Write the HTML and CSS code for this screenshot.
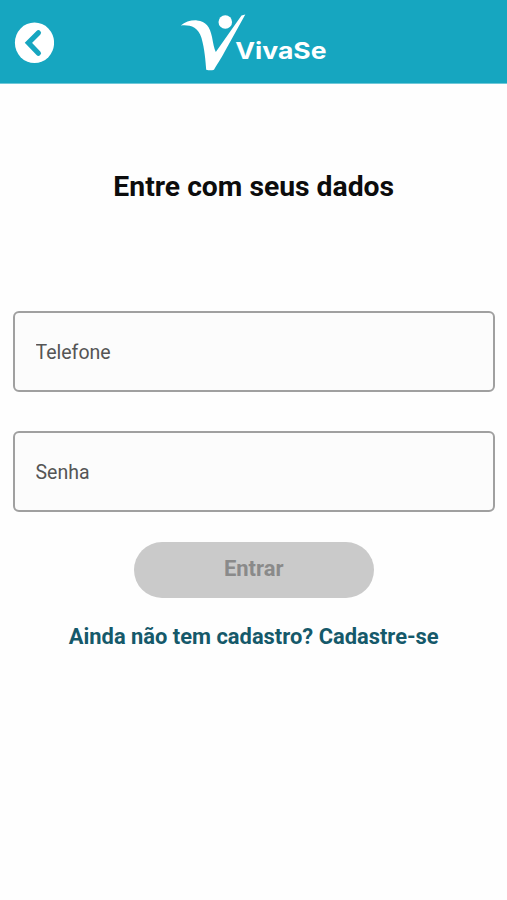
FILE: index.html
```html
<!DOCTYPE html>
<html lang="pt-BR">
<head>
<meta charset="utf-8">
<meta name="viewport" content="width=device-width, initial-scale=1">
<title>VivaSe</title>
<link rel="stylesheet" href="styles.css">
</head>
<body>
<header class="topbar">
  <button class="back" type="button" aria-label="Voltar">
    <svg width="40" height="42" viewBox="0 0 40 42"><ellipse cx="20.5" cy="20.8" rx="19.6" ry="20.3" fill="#fff"/><path d="M24.4 10.8 14.4 20.8 24.4 31.2" fill="none" stroke="#16a6c0" stroke-width="5.2" stroke-linecap="round" stroke-linejoin="miter"/></svg>
  </button>
  <svg class="logo" width="150" height="62" viewBox="0 0 150 62" role="img" aria-label="VivaSe">
    <path d="M.8 14.4C5 11 11 9 17 9.4C26 10 30 16 32 26C33.2 32.5 34 37 35.8 41L61.5 4.4L65.3 3.6L44.5 41C40.5 49 37 53 34 58.8Q30.5 59.8 26.2 58.8C25.6 50 24.6 38 21.5 27C18 15 9 13.6 .8 14.4Z" fill="#fff"/>
    <circle cx="45.3" cy="11" r="6.8" fill="#fff"/>
    <text class="logo-text" transform="translate(55.3 47.7) scale(1.18 1)" textLength="77.3" lengthAdjust="spacingAndGlyphs">VivaSe</text>
  </svg>
</header>
<main class="content">
  <h1 class="title">Entre com seus dados</h1>
  <form class="form">
    <input class="field" type="tel" placeholder="Telefone">
    <input class="field" type="password" placeholder="Senha">
    <button class="submit" type="button" disabled>Entrar</button>
  </form>
  <a class="signup">Ainda não tem cadastro? Cadastre-se</a>
</main>
</body>
</html>
```
FILE: styles.css
```css
* { box-sizing: border-box; }
body {
  margin: 0;
  min-height: 900px;
  background: #fefefe;
  font-family: Roboto, "Liberation Sans", sans-serif;
}
.topbar {
  display: flex;
  align-items: flex-start;
  height: 84px;
  padding: 11px 0 0 14px;
  background: #16a6c0;
  border-bottom: 1px solid #6fc8d8;
}
.back {
  width: 40px;
  height: 42px;
  margin-top: 11px;
  padding: 0;
  border: 0;
  background: none;
}
.back svg, .logo { display: block; }
.logo { margin-left: 126px; }
.logo-text {
  font: 700 23px Inter, "Open Sans", sans-serif;
  fill: #fff;
}
.content {
  display: flex;
  flex-direction: column;
  align-items: center;
  padding: 85px 12.5px 0 13px;
}
.title {
  margin: 0 0 106px;
  font-size: 28.3px;
  line-height: 36px;
  font-weight: 700;
  color: #0c0c0c;
}
.form {
  display: flex;
  flex-direction: column;
  align-items: center;
  width: 100%;
}
.field {
  width: 100%;
  height: 81px;
  margin-bottom: 39px;
  padding: 2px 20.5px 0;
  border: 2px solid #a0a0a0;
  border-radius: 6px;
  background: #fcfcfc;
  font: 400 19.5px Roboto, sans-serif;
}
.field + .field { margin-bottom: 30px; }
.field::placeholder { color: #555; opacity: 1; }
.submit {
  width: 240px;
  height: 56px;
  padding: 0 0 4px;
  border: 0;
  border-radius: 28px;
  background: #cacaca;
  color: #8a8a8a;
  font: 700 22px Roboto, sans-serif;
}
.signup {
  margin-top: 25px;
  font-size: 21.9px;
  line-height: 28px;
  font-weight: 700;
  color: #15596a;
  white-space: nowrap;
}
```
